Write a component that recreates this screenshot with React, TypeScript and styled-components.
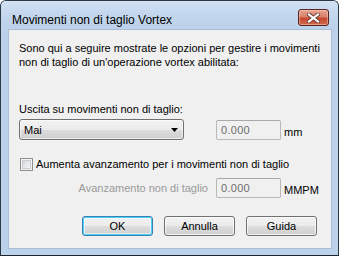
import { ReactNode } from 'react'
import styled, { createGlobalStyle } from 'styled-components'

const GlobalStyle = createGlobalStyle`
  html, body {
    margin: 0;
    padding: 0;
    background: #ffffff;
  }
  body {
    font-family: 'Liberation Sans', Arial, sans-serif;
    font-size: 11px;
    color: #000;
  }
  * {
    box-sizing: border-box;
  }
`

const Dialog = () => {
  return (
    <>
      <GlobalStyle />
      <WindowFrame>
        <TitleBar>
          <span className="title">Movimenti non di taglio Vortex</span>
          <CloseButton aria-label="Chiudi">
            <svg width="13" height="10" viewBox="0 0 13 10">
              <path d="M2 1.5 L11 8.5 M11 1.5 L2 8.5" stroke="#6b3a30" strokeWidth="4" strokeLinecap="square" />
              <path d="M2 1.5 L11 8.5 M11 1.5 L2 8.5" stroke="#ffffff" strokeWidth="2.2" strokeLinecap="square" />
            </svg>
          </CloseButton>
        </TitleBar>
        <FrameBody>
          <ClientArea>
            <Description>
              Sono qui a seguire mostrate le opzioni per gestire i movimenti
              <br />
              non di taglio di un'operazione vortex abilitata:
            </Description>

            <FieldLabel>Uscita su movimenti non di taglio:</FieldLabel>
            <FieldGrid>
              <ComboBox>
                <span>Mai</span>
                <svg width="7" height="4" viewBox="0 0 7 4">
                  <path d="M0 0 H7 L3.5 4 Z" fill="#000" />
                </svg>
              </ComboBox>
              <TextBox>0.000</TextBox>
              <Unit>mm</Unit>
            </FieldGrid>

            <CheckRow>
              <CheckBox />
              <span>Aumenta avanzamento per i movimenti non di taglio</span>
            </CheckRow>

            <FieldGrid $top={7}>
              <SideLabel>Avanzamento non di taglio</SideLabel>
              <TextBox>0.000</TextBox>
              <Unit>MMPM</Unit>
            </FieldGrid>

            <ButtonBar>
              <PushButton $primary>OK</PushButton>
              <PushButton>Annulla</PushButton>
              <PushButton>Guida</PushButton>
            </ButtonBar>
          </ClientArea>
        </FrameBody>
      </WindowFrame>
    </>
  )
}

const App = (): ReactNode => <Dialog />
export default App

export const WindowFrame = styled.div`
  width: 339px;
  height: 256px;
  border: 1px solid #2c3845;
  border-bottom-color: #1c242c;
  border-radius: 6px 6px 0 0;
  background: #bcd2ea;
  box-shadow: 0 1px 0 #35c6e2;
  display: flex;
  flex-direction: column;
  overflow: hidden;
`

export const TitleBar = styled.div`
  height: 28px;
  flex-shrink: 0;
  display: flex;
  align-items: flex-start;
  padding: 0 9px 0 11px;
  background: linear-gradient(#d3e2f3 0%, #c3d7ee 45%, #bcd2ea 100%);

  .title {
    font-size: 12px;
    line-height: 14px;
    margin-top: 12px;
    color: #000;
  }
`

export const CloseButton = styled.div`
  margin-left: auto;
  margin-top: 8px;
  width: 31px;
  height: 17px;
  border: 1px solid #5a2219;
  border-radius: 3px;
  background: linear-gradient(#e8a493 0%, #d7806a 45%, #c5482f 55%, #cf6a4d 100%);
  box-shadow: inset 0 0 0 1px rgba(255, 220, 210, 0.45);
  display: flex;
  align-items: center;
  justify-content: center;
`

export const FrameBody = styled.div`
  flex: 1;
  display: flex;
  padding: 0 6px 6px 7px;
`

export const ClientArea = styled.div`
  flex: 1;
  background: #f0f0f0;
  border: 1px solid #a9bed6;
  padding: 11px 0 0 10px;
  display: flex;
  flex-direction: column;
`

export const Description = styled.div`
  line-height: 14px;
`

export const FieldLabel = styled.div`
  line-height: 14px;
  margin-top: 33px;
`

export const FieldGrid = styled.div<{ $top?: number }>`
  display: grid;
  grid-template-columns: 197px 65px auto;
  align-items: center;
  margin-top: ${(p) => p.$top ?? 3}px;
`

export const ComboBox = styled.div`
  width: 165px;
  height: 21px;
  border: 1px solid #707070;
  border-radius: 3px;
  background: linear-gradient(#f2f2f2 0%, #ebebeb 50%, #dddddd 51%, #cfcfcf 100%);
  box-shadow: inset 0 0 0 1px rgba(255, 255, 255, 0.6);
  display: flex;
  align-items: center;
  justify-content: space-between;
  padding: 0 5px 0 4px;
  line-height: 14px;
`

export const TextBox = styled.div`
  width: 65px;
  height: 20px;
  border: 1px solid #b8b8b8;
  border-top-color: #a8a8a8;
  border-radius: 2px;
  background: #f0f0f0;
  color: #6d6d6d;
  padding: 0 4px;
  line-height: 18px;
  font-size: 11px;
  letter-spacing: 0.3px;
`

export const Unit = styled.span`
  margin-left: 3px;
  margin-top: 4px;
  line-height: 14px;
`

export const SideLabel = styled.span`
  justify-self: end;
  padding-right: 8px;
  color: #9a9a9a;
  line-height: 14px;
`

export const CheckRow = styled.div`
  display: flex;
  align-items: center;
  gap: 3px;
  margin-top: 17px;
  padding-left: 1px;
  line-height: 14px;
`

export const CheckBox = styled.div`
  width: 13px;
  height: 13px;
  border: 1px solid #8e8f8f;
  background: linear-gradient(135deg, #cbcfd5 0%, #eaebec 60%, #f6f6f6 100%);
  box-shadow: inset 0 0 0 1px #f4f4f4, inset 0 0 0 2px #c9ccd1;
`

export const ButtonBar = styled.div`
  display: flex;
  gap: 11px;
  margin-top: 18px;
  padding-left: 63px;
`

export const PushButton = styled.div<{ $primary?: boolean }>`
  width: 71px;
  height: 20px;
  border: 1px solid ${(p) => (p.$primary ? '#3c7fb1' : '#707070')};
  border-radius: 3px;
  background: linear-gradient(#f2f2f2 0%, #ebebeb 50%, #dddddd 51%, #cfcfcf 100%);
  box-shadow: ${(p) =>
    p.$primary
      ? 'inset 0 0 0 1px #48d1f9, inset 0 0 0 2px rgba(255,255,255,0.5)'
      : 'inset 0 0 0 1px rgba(255,255,255,0.7)'};
  display: flex;
  align-items: center;
  justify-content: center;
  line-height: 14px;
`
